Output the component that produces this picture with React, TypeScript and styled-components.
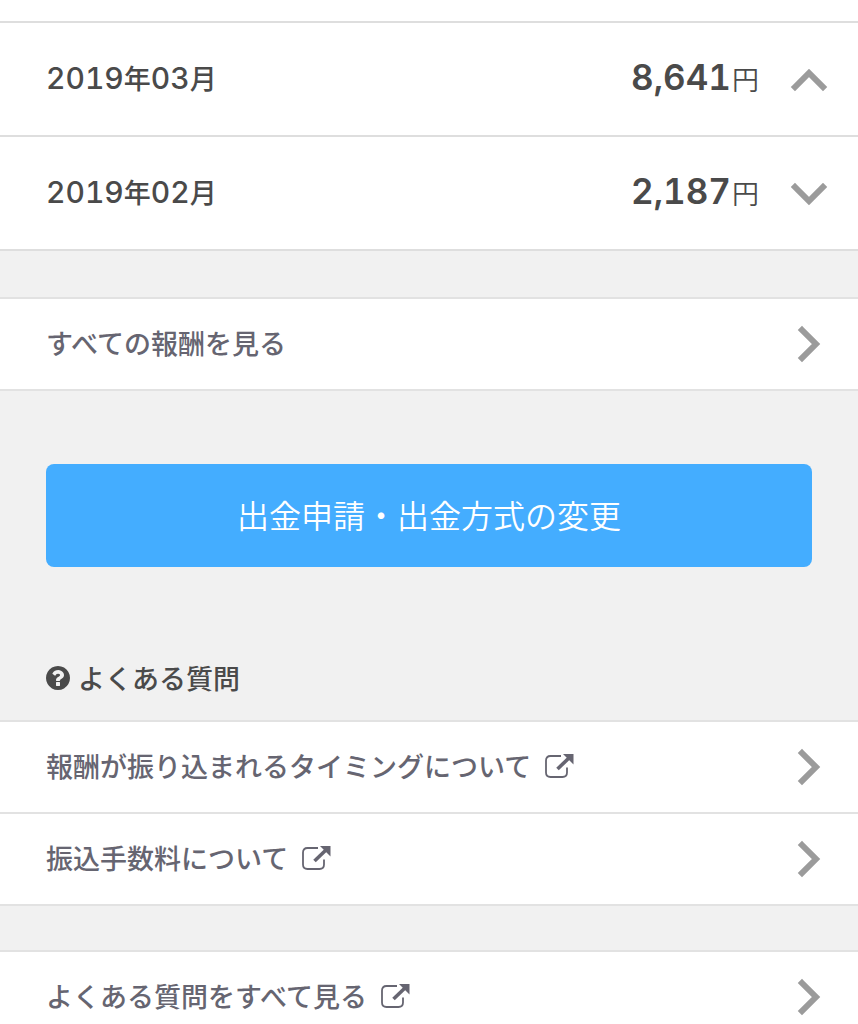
import React from "react";
import styled, { createGlobalStyle } from "styled-components";

const GlobalStyle = createGlobalStyle`
  *, *::before, *::after { box-sizing: border-box; }
  body {
    margin: 0;
    background: #f1f1f1;
    color: #4a4a4a;
    font-family: "Noto Sans CJK JP", sans-serif;
    font-size: 27px;
    line-height: 40px;
  }
`;

const Page = styled.main`
  overflow: hidden;
`;

const MonthList = styled.section`
  padding-top: 21px;
  background: #fff;
  border-bottom: 2px solid #dedede;
`;

const MonthRow = styled.button`
  display: flex;
  align-items: center;
  width: 100%;
  height: 114px;
  padding: 0 30px 0 46px;
  border: 0;
  border-top: 2px solid #dedede;
  background: none;
  color: inherit;
  font: inherit;
  font-weight: 500;
  text-align: left;
  cursor: pointer;
`;

const Month = styled.span`
  flex: 1;
  padding-bottom: 2px;
`;

const Amount = styled.span`
  padding-bottom: 2px;
`;

const Digits = styled.span<{ $large?: boolean }>`
  font-family: Inter, sans-serif;
  font-size: ${(p) => (p.$large ? 35 : 30)}px;
  font-weight: ${(p) => (p.$large ? 600 : 500)};
  font-variant-numeric: tabular-nums;
`;

const Yen = styled.span`
  margin-left: 1px;
  font-weight: 350;
`;

const Arrow = styled.svg`
  flex: none;
  width: 38px;
  height: 38px;
  margin-left: 31px;
  fill: none;
  stroke: #9b9b9b;
  stroke-width: 6;
  stroke-linecap: square;
`;

const LinkList = styled.nav<{ $gap?: number }>`
  margin-top: ${(p) => p.$gap ?? 0}px;
  border-bottom: 2px solid #e2e2e2;
  background: #fff;
`;

const LinkRow = styled.a`
  display: flex;
  align-items: center;
  justify-content: space-between;
  height: 92px;
  padding: 0 30px 0 46px;
  border-top: 2px solid #e2e2e2;
  color: #666571;
  font-weight: 500;
  text-decoration: none;
`;

const LinkLabel = styled.span`
  display: flex;
  align-items: center;
  gap: 14px;
  padding-bottom: 2px;
`;

const ExternalIcon = styled.svg`
  width: 30px;
  height: 28px;
  fill: none;
  stroke: currentColor;
`;

const Action = styled.div`
  padding: 73px 46px 88px;
`;

const ActionButton = styled.button`
  display: block;
  width: 100%;
  height: 103px;
  padding: 0 0 4px;
  border: 0;
  border-radius: 8px;
  background: #44adff;
  color: #fff;
  font: inherit;
  font-size: 32px;
  font-weight: 350;
  cursor: pointer;
`;

const Heading = styled.h2`
  display: flex;
  align-items: center;
  gap: 8px;
  height: 65px;
  margin: 0;
  padding: 0 46px 20px;
  font-size: 27px;
  font-weight: 500;
`;

const QuestionIcon = styled.svg`
  width: 24px;
  height: 28px;
  fill: currentColor;
`;

const arrowPoints = {
  up: "5,27 19,13 33,27",
  down: "5,13 19,27 33,13",
  right: "12,5 26,19 12,33",
};

function Chevron({ direction }: { direction: keyof typeof arrowPoints }) {
  return (
    <Arrow viewBox="0 0 38 38" aria-hidden="true">
      <polyline points={arrowPoints[direction]} />
    </Arrow>
  );
}

function MonthItem({ year, month, amount, open = false }: { year: string; month: string; amount: string; open?: boolean }) {
  return (
    <MonthRow type="button" aria-expanded={open}>
      <Month>
        <Digits>{year}</Digits>年<Digits>{month}</Digits>月
      </Month>
      <Amount>
        <Digits $large>{amount}</Digits>
        <Yen>円</Yen>
      </Amount>
      <Chevron direction={open ? "up" : "down"} />
    </MonthRow>
  );
}

function LinkItem({ label, external = false }: { label: string; external?: boolean }) {
  return (
    <LinkRow href="#">
      <LinkLabel>
        {label}
        {external && (
          <ExternalIcon viewBox="0 0 30 28" aria-hidden="true">
            <path d="M16 4H5.500Q1 4 1 8.500V20.500Q1 25 5.500 25H17.500Q22 25 22 20.500V15.500" strokeWidth="1.800" />
            <path d="M12.500 17L25 5" strokeWidth="3.600" />
            <path d="M18 2H28.500V12.500Z" fill="currentColor" stroke="none" />
          </ExternalIcon>
        )}
      </LinkLabel>
      <Chevron direction="right" />
    </LinkRow>
  );
}

export default function App() {
  return (
    <>
      <GlobalStyle />
      <Page>
        <MonthList>
          <MonthItem year="2019" month="03" amount="8,641" open />
          <MonthItem year="2019" month="02" amount="2,187" />
        </MonthList>
        <LinkList $gap={46}>
          <LinkItem label="すべての報酬を見る" />
        </LinkList>
        <Action>
          <ActionButton type="button">出金申請・出金方式の変更</ActionButton>
        </Action>
        <Heading>
          <QuestionIcon viewBox="0 0 1536 1792" aria-hidden="true">
            <path d="M896 1376v-192q0-14-9-23t-23-9h-192q-14 0-23 9t-9 23v192q0 14 9 23t23 9h192q14 0 23-9t9-23zm256-672q0-88-55.5-163t-138.5-116-170-41q-243 0-371 213-15 24 8 42l132 100q7 6 19 6 16 0 25-12 53-68 86-92 34-24 86-24 48 0 85.5 26t37.5 59q0 38-20 61t-68 45q-63 28-115.5 86.5t-52.5 125.5v36q0 14 9 23t23 9h192q14 0 23-9t9-23q0-19 21.5-49.5t54.5-49.5q32-18 49-28.5t46-35 44.5-48 28-60.5 12.5-81zm384 192q0 209-103 385.5t-279.5 279.5-385.5 103-385.5-103-279.5-279.5-103-385.5 103-385.5 279.5-279.5 385.5-103 385.5 103 279.5 279.5 103 385.5z" />
          </QuestionIcon>
          よくある質問
        </Heading>
        <LinkList>
          <LinkItem label="報酬が振り込まれるタイミングについて" external />
          <LinkItem label="振込手数料について" external />
        </LinkList>
        <LinkList $gap={44}>
          <LinkItem label="よくある質問をすべて見る" external />
        </LinkList>
      </Page>
    </>
  );
}
